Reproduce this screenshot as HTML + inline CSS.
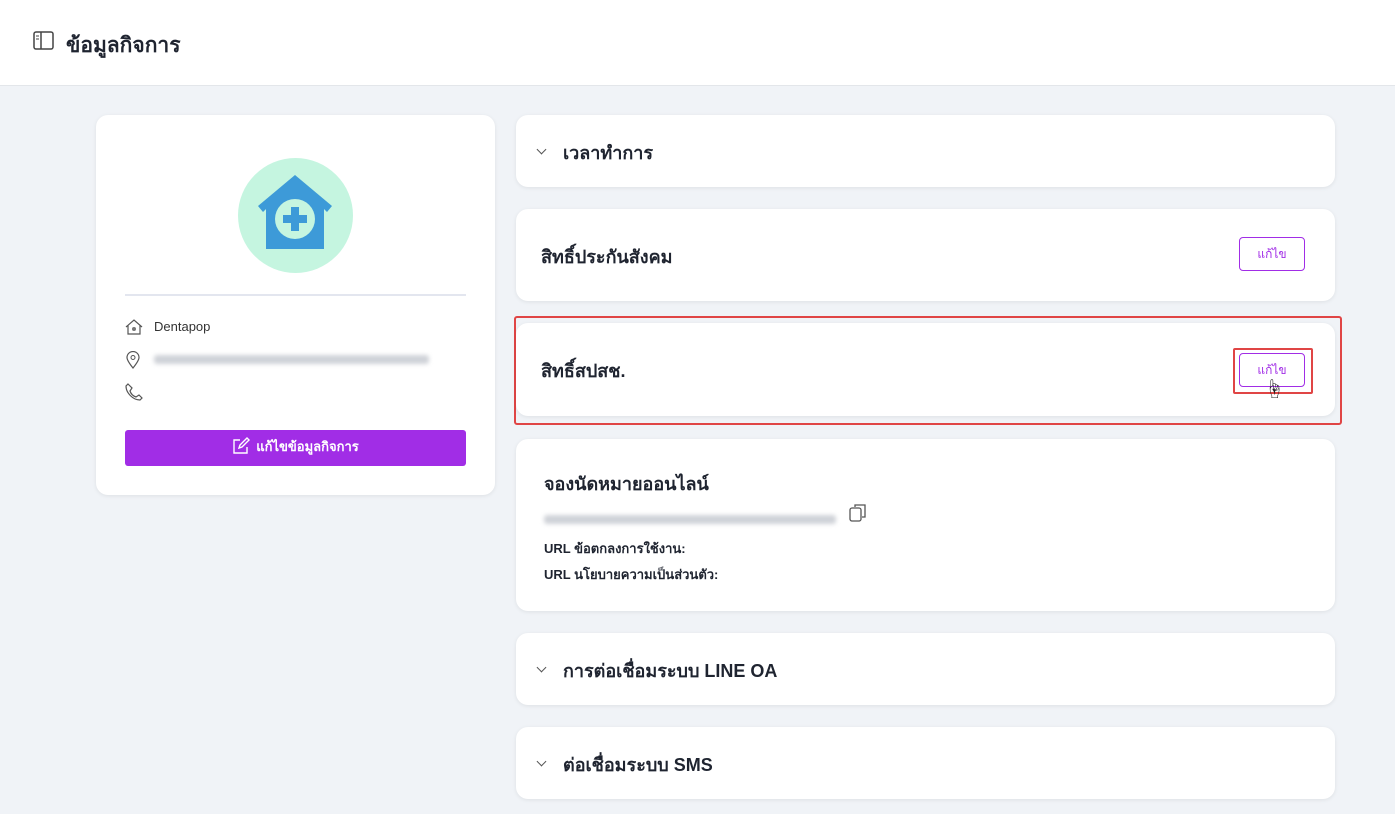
<!DOCTYPE html>
<html><head><meta charset="utf-8"><style>
*{box-sizing:border-box;margin:0;padding:0}
body{width:1395px;height:814px;background:#f0f3f7;font-family:"Liberation Sans","Noto Sans CJK SC",sans-serif;color:#222;position:relative;overflow:hidden}
.top{position:absolute;left:0;top:0;width:1395px;height:86px;background:#fff;border-bottom:1px solid #e3e6ea}
.top h1{position:absolute;left:66px;top:29px;font-size:21px;font-weight:bold;color:#1f2430}
.card{position:absolute;background:#fff;border-radius:12px;box-shadow:0 1px 4px rgba(0,0,0,.08)}
.t{position:absolute;font-size:18px;font-weight:bold;color:#1f2430}
.btn{position:absolute;width:66px;height:34px;border:1px solid #a12de6;border-radius:4px;color:#a12de6;font-size:12px;text-align:center;line-height:32px;background:#fff}
.chev{position:absolute;left:22px;width:7px;height:7px;border-right:1.3px solid #555;border-bottom:1.3px solid #555;transform:rotate(45deg)}
.blur{background:#cfd2d8;filter:blur(2px);height:9px;position:absolute;border-radius:3px}
.s{position:absolute;font-size:13px;font-weight:bold;color:#1f2430}
</style></head><body>
<div class="top">
<svg style="position:absolute;left:33px;top:31px" width="21" height="19" viewBox="0 0 21 19"><rect x="1" y="1" width="19" height="17" rx="2" fill="none" stroke="#444" stroke-width="1.5"/><line x1="8" y1="1" x2="8" y2="18" stroke="#444" stroke-width="1.5"/><line x1="3" y1="5" x2="6" y2="5" stroke="#444"/><line x1="3" y1="8" x2="6" y2="8" stroke="#444"/></svg>
<h1>ข้อมูลกิจการ</h1></div>

<div class="card" style="left:96px;top:115px;width:399px;height:380px">
<div style="position:absolute;left:142px;top:43px;width:115px;height:115px;border-radius:50%;background:#c5f5e0"></div>
<svg style="position:absolute;left:159px;top:57px" width="80" height="80" viewBox="0 0 80 80"><path d="M40 3 L77 34 L72 40 L69 37 V77 H11 V37 L8 40 L3 34 Z" fill="#3d9ad8"/><circle cx="40" cy="47" r="20" fill="#c5f5e0"/><rect x="36" y="35" width="8" height="24" fill="#3d9ad8"/><rect x="28" y="43" width="24" height="8" fill="#3d9ad8"/></svg>
<div style="position:absolute;left:29px;top:179px;width:341px;height:2px;background:#e3e6ef"></div>
<svg style="position:absolute;left:29px;top:204px" width="18" height="16" viewBox="0 0 18 16"><path d="M1 8 L9 1 L17 8 M3 6 V15 H15 V6" fill="none" stroke="#555" stroke-width="1.2"/><circle cx="9" cy="10" r="2" fill="#777"/></svg>
<div style="position:absolute;left:58px;top:204px;font-size:13px;color:#333">Dentapop</div>
<svg style="position:absolute;left:30px;top:236px" width="14" height="18" viewBox="0 0 14 18"><path d="M7 17 C3 12 1 9 1 6.5 A6 6 0 0 1 13 6.5 C13 9 11 12 7 17Z" fill="none" stroke="#555" stroke-width="1.2"/><circle cx="7" cy="6.5" r="2" fill="none" stroke="#555"/></svg>
<div class="blur" style="left:58px;top:240px;width:275px"></div>
<svg style="position:absolute;left:29px;top:268px" width="18" height="18" viewBox="0 0 18 18"><path d="M3 1 L7 5 L5 8 C6 11 8 13 11 14 L14 12 L17 15 L15 17 C8 17 1 10 1 3Z" fill="none" stroke="#555" stroke-width="1.2"/></svg>
<div style="position:absolute;left:29px;top:315px;width:341px;height:36px;background:#a12de6;border-radius:3px;color:#fff;font-size:13px;font-weight:bold;text-align:center;line-height:34px">
<svg style="vertical-align:-4px;margin-right:6px" width="18" height="18" viewBox="0 0 18 18"><path d="M8 3 H2 V16 H15 V10 M7 11 L8 8 L15 1 L17 3 L10 10Z" fill="none" stroke="#fff" stroke-width="1.4"/></svg>แก้ไขข้อมูลกิจการ</div>
</div>

<div class="card" style="left:516px;top:115px;width:819px;height:72px"><span class="chev" style="top:31px"></span><div class="t" style="left:47px;top:23px">เวลาทำการ</div></div>
<div class="card" style="left:516px;top:209px;width:819px;height:92px"><div class="t" style="left:25px;top:33px">สิทธิ์ประกันสังคม</div><div class="btn" style="left:723px;top:28px">แก้ไข</div></div>
<div style="position:absolute;left:514px;top:316px;width:828px;height:109px;border:2px solid #e04545;border-radius:3px"></div>
<div class="card" style="left:516px;top:323px;width:819px;height:93px"><div class="t" style="left:25px;top:33px">สิทธิ์สปสช.</div>
<div style="position:absolute;left:717px;top:25px;width:80px;height:46px;border:2px solid #e04545;border-radius:2px"></div>
<div class="btn" style="left:723px;top:30px">แก้ไข</div>
<div style="position:absolute;left:748px;top:50px;font-size:20px">☝</div></div>
<div class="card" style="left:516px;top:439px;width:819px;height:172px"><div class="t" style="left:28px;top:30px">จองนัดหมายออนไลน์</div>
<div class="blur" style="left:28px;top:76px;width:292px"></div>
<svg style="position:absolute;left:333px;top:64px" width="18" height="20" viewBox="0 0 18 20"><rect x="1" y="5" width="11" height="13" rx="2" fill="none" stroke="#555" stroke-width="1.3"/><path d="M6 4 V2 H16 V14 H13" fill="none" stroke="#555" stroke-width="1.3"/></svg>
<div class="s" style="left:28px;top:99px">URL ข้อตกลงการใช้งาน:</div>
<div class="s" style="left:28px;top:125px">URL นโยบายความเป็นส่วนตัว:</div></div>
<div class="card" style="left:516px;top:633px;width:819px;height:72px"><span class="chev" style="top:31px"></span><div class="t" style="left:47px;top:23px">การต่อเชื่อมระบบ LINE OA</div></div>
<div class="card" style="left:516px;top:727px;width:819px;height:72px"><span class="chev" style="top:31px"></span><div class="t" style="left:47px;top:23px">ต่อเชื่อมระบบ SMS</div></div>
</body></html>
